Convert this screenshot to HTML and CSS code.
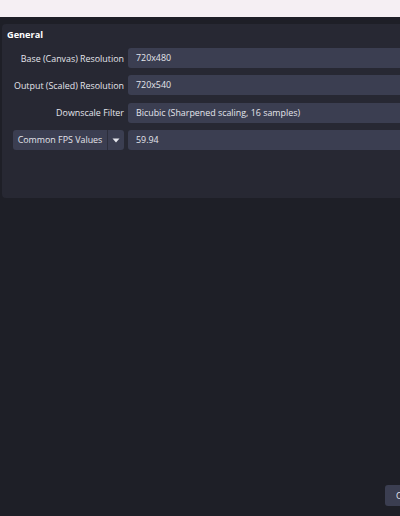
FILE: index.html
```html
<!DOCTYPE html>
<html>
<head>
<meta charset="utf-8">
<link rel="stylesheet" href="styles.css">
</head>
<body>
<div class="topbar"></div>
<div class="main">
  <div class="group">
    <div class="title">General</div>
    <div class="form">
      <div class="row">
        <div class="label">Base (Canvas) Resolution</div>
        <div class="field">720x480</div>
      </div>
      <div class="row">
        <div class="label">Output (Scaled) Resolution</div>
        <div class="field">720x540</div>
      </div>
      <div class="row">
        <div class="label">Downscale Filter</div>
        <div class="field">Bicubic (Sharpened scaling, 16 samples)</div>
      </div>
      <div class="row">
        <div class="label"><div class="combo"><span class="combo-text">Common FPS Values</span><span class="combo-arrow"><svg width="8" height="5" viewBox="0 0 8 5"><path d="M0.5 0.5 L7.5 0.5 L4 4.5 Z" fill="#e6e7ee"/></svg></span></div></div>
        <div class="field">59.94</div>
      </div>
    </div>
  </div>
  <div class="spacer"></div>
  <div class="footer"><div class="btn">C</div></div>
</div>
</body>
</html>
```
FILE: styles.css
```css
html, body {
  margin: 0;
  padding: 0;
  width: 400px;
  height: 516px;
  overflow: hidden;
  background: #1e1f27;
  font-family: "Open Sans", sans-serif;
  font-size: 8.9px;
  color: #e4e5ec;
  white-space: nowrap;
}
.topbar {
  height: 17px;
  background: #f5eff3;
}
.main {
  height: 499px;
  display: flex;
  flex-direction: column;
  padding-top: 7px;
  box-sizing: border-box;
}
.group {
  margin-left: 2px;
  margin-right: -10px;
  height: 174px;
  background: #272833;
  border-radius: 4px;
  box-sizing: border-box;
  padding: 2px 0 0 5px;
}
.title {
  font-weight: 700;
  font-size: 9.2px;
  color: #ffffff;
  height: 18px;
  line-height: 18px;
}
.form {
  display: flex;
  flex-direction: column;
  gap: 7.4px;
  margin-top: 4px;
}
.row {
  display: flex;
  align-items: center;
  gap: 4px;
  height: 20px;
}
.label {
  width: 117px;
  text-align: right;
  flex: none;
  display: flex;
  justify-content: flex-end;
}
.field {
  flex: 1;
  height: 20px;
  line-height: 20px;
  background: #3b3e51;
  border-radius: 3px;
  padding-left: 8px;
}
.combo {
  width: 111px;
  height: 20px;
  background: #3b3e51;
  border-radius: 3px;
  display: flex;
  box-sizing: border-box;
}
.combo-text {
  flex: 1;
  line-height: 20px;
  text-align: center;
  border-right: 1px solid #2c2e3b;
}
.combo-arrow {
  width: 16px;
  display: flex;
  align-items: center;
  justify-content: center;
}
.spacer { flex: 1; }
.footer {
  height: 31px;
  display: flex;
  justify-content: flex-end;
  align-items: flex-start;
}
.btn {
  width: 30px;
  margin-right: -15px;
  height: 21px;
  line-height: 21px;
  background: #3b3e51;
  border-radius: 3px;
  padding-left: 11px;
  box-sizing: border-box;
}
```
